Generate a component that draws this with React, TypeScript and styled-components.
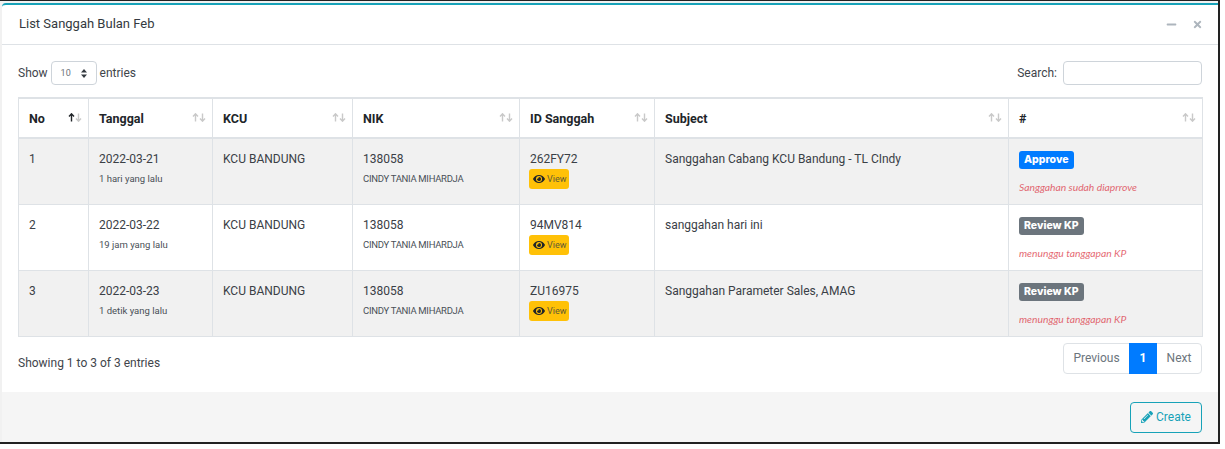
import React from "react";
import styled, { createGlobalStyle } from "styled-components";
import { FaEye, FaMinus, FaPencilAlt, FaTimes } from "react-icons/fa";

const GlobalStyle = createGlobalStyle`
  html, body {
    margin: 0;
    padding: 0;
    background: #fff;
  }
  body {
    font-family: "Roboto", "Noto Sans", sans-serif;
    font-size: 12px;
    color: #212529;
  }
`;

const Frame = styled.div`
  box-sizing: border-box;
  width: 1220px;
  height: 444px;
  padding: 2px 0 0 2px;
  background: #f1f1f1;
  border-top: 1px solid #222;
  border-right: 2px solid #222;
  border-bottom: 2px solid #222;
`;

const Card = styled.section`
  display: flex;
  flex-direction: column;
  height: 100%;
  box-sizing: border-box;
  background: #fff;
  border-top: 2px solid #17a2b8;
  border-top-left-radius: 4px;
`;

const CardHeader = styled.header`
  display: flex;
  align-items: center;
  justify-content: space-between;
  box-sizing: border-box;
  height: 40px;
  padding: 0 15px 2px 17px;
  border-bottom: 1px solid #dee2e6;
`;

const Title = styled.h3`
  margin: 0;
  font-size: 13px;
  font-weight: 400;
  color: #343a40;
`;

const Tools = styled.div`
  display: flex;
  align-items: center;
  gap: 15px;
  padding-top: 1px;
  color: #adb5bd;
  font-size: 11px;
`;

const CardBody = styled.div`
  flex: 1;
  padding: 16px 16px 0 16px;
`;

const TopBar = styled.div`
  display: flex;
  align-items: center;
  justify-content: space-between;
  height: 24px;
  margin-bottom: 12px;
`;

const FieldLabel = styled.label`
  display: flex;
  align-items: center;
  gap: 3px;
  font-size: 12px;
  color: #3f454b;
`;

const LengthBox = styled.span`
  display: inline-flex;
  align-items: center;
  justify-content: space-between;
  box-sizing: border-box;
  width: 46px;
  height: 24px;
  padding: 0 9px;
  border: 1px solid #ced4da;
  border-radius: 4px;
  font-size: 9px;
  color: #6b7278;
`;

const SelectArrows = styled.svg`
  width: 6px;
  height: 9px;
  fill: #343a40;
`;

const SearchInput = styled.input`
  box-sizing: border-box;
  width: 139px;
  height: 24px;
  margin-left: 3px;
  border: 1px solid #ced4da;
  border-radius: 4px;
  background: #fff;
`;

const Table = styled.table`
  width: 1184px;
  table-layout: fixed;
  border-collapse: collapse;
  border: 1px solid #dee2e6;
`;

const HeadCell = styled.th<{ $w: number }>`
  position: relative;
  box-sizing: border-box;
  width: ${(p) => p.$w}px;
  height: 40px;
  padding: 0 10px;
  border: 1px solid #dee2e6;
  border-top-width: 2px;
  border-bottom-width: 2px;
  text-align: left;
  font-size: 12.5px;
  font-weight: 700;
  color: #212529;
`;

const SortIcons = styled.svg`
  position: absolute;
  top: 14px;
  right: 6px;
  width: 14px;
  height: 9px;
  fill: none;
  stroke-width: 1.4;
`;

const Row = styled.tr<{ $odd: boolean }>`
  height: 66px;
  background: ${(p) => (p.$odd ? "#f1f1f1" : "#fff")};
`;

const Cell = styled.td`
  box-sizing: border-box;
  padding: 12px 10px 0;
  border: 1px solid #dee2e6;
  vertical-align: top;
  font-size: 12px;
  line-height: 16px;
  color: #3a4046;
`;

const SubText = styled.div`
  margin-top: 5px;
  font-size: 9.5px;
  line-height: 14px;
  color: #495057;
`;

const NameText = styled(SubText)`
  letter-spacing: -0.3px;
`;

const ViewButton = styled.span`
  display: flex;
  align-items: center;
  gap: 2px;
  box-sizing: border-box;
  width: 40px;
  height: 20px;
  margin: 2px 0 0 -1px;
  padding-left: 4px;
  border-radius: 3px;
  background: #ffc107;
  font-size: 9px;
  color: #5f5a35;

  svg {
    font-size: 12px;
    color: #212529;
  }
`;

const Badge = styled.span<{ $tone: "primary" | "secondary" }>`
  display: inline-block;
  padding: 0 5px;
  height: 18px;
  border-radius: 3px;
  background: ${(p) => (p.$tone === "primary" ? "#007bff" : "#6c757d")};
  font-family: "Inter", "Lato", sans-serif;
  font-size: 10.5px;
  font-weight: 800;
  line-height: 18px;
  color: #fff;
`;

const Note = styled.div`
  margin-top: 11px;
  font-family: "Lato", sans-serif;
  font-size: 10.3px;
  font-style: italic;
  line-height: 14px;
  color: #dc3545;
  opacity: 0.75;
`;

const BottomBar = styled.div`
  display: flex;
  align-items: flex-start;
  justify-content: space-between;
  margin-top: 6px;
`;

const Info = styled.div`
  padding-top: 13px;
  font-size: 12px;
  color: #3f454b;
`;

const Pager = styled.nav`
  display: flex;
  box-sizing: border-box;
  height: 31px;
  border: 1px solid #dee2e6;
  border-radius: 4px;
`;

const PageItem = styled.span<{ $active?: boolean; $w: number }>`
  display: flex;
  align-items: center;
  justify-content: center;
  width: ${(p) => p.$w}px;
  margin: -1px 0;
  font-size: 12px;
  font-weight: ${(p) => (p.$active ? 700 : 400)};
  background: ${(p) => (p.$active ? "#007bff" : "transparent")};
  color: ${(p) => (p.$active ? "#fff" : "#6c757d")};
`;

const CardFooter = styled.footer`
  display: flex;
  align-items: center;
  justify-content: flex-end;
  box-sizing: border-box;
  height: 50px;
  padding: 0 16px 0 0;
  background: #f5f5f5;
`;

const CreateButton = styled.button`
  display: flex;
  align-items: center;
  justify-content: center;
  gap: 3px;
  box-sizing: border-box;
  width: 72px;
  height: 31px;
  border: 1px solid #17a2b8;
  border-radius: 4px;
  background: transparent;
  font-family: inherit;
  font-size: 12px;
  color: #17a2b8;
`;

const columns = [
  { label: "No", width: 70 },
  { label: "Tanggal", width: 124 },
  { label: "KCU", width: 140 },
  { label: "NIK", width: 167 },
  { label: "ID Sanggah", width: 135 },
  { label: "Subject", width: 354 },
  { label: "#", width: 194 },
];

const rows = [
  {
    no: 1,
    date: "2022-03-21",
    ago: "1 hari yang lalu",
    id: "262FY72",
    subject: "Sanggahan Cabang KCU Bandung - TL CIndy",
    status: "Approve",
    tone: "primary" as const,
    note: "Sanggahan sudah diaprrove",
  },
  {
    no: 2,
    date: "2022-03-22",
    ago: "19 jam yang lalu",
    id: "94MV814",
    subject: "sanggahan hari ini",
    status: "Review KP",
    tone: "secondary" as const,
    note: "menunggu tanggapan KP",
  },
  {
    no: 3,
    date: "2022-03-23",
    ago: "1 detik yang lalu",
    id: "ZU16975",
    subject: "Sanggahan Parameter Sales, AMAG",
    status: "Review KP",
    tone: "secondary" as const,
    note: "menunggu tanggapan KP",
  },
];

const SortArrows = ({ active }: { active: boolean }) => (
  <SortIcons viewBox="0 0 14 9">
    <path
      d="M3.5 8.5V1M1 3.4l2.5-2.6L6 3.4"
      stroke={active ? "#212529" : "#c9c9c9"}
    />
    <path d="M10.5 .5V8M8 5.6l2.5 2.6L13 5.6" stroke="#c9c9c9" />
  </SortIcons>
);

export default function App() {
  return (
    <>
      <GlobalStyle />
      <Frame>
        <Card>
          <CardHeader>
            <Title>List Sanggah Bulan Feb</Title>
            <Tools>
              <FaMinus />
              <FaTimes />
            </Tools>
          </CardHeader>
          <CardBody>
            <TopBar>
              <FieldLabel>
                Show
                <LengthBox>
                  10
                  <SelectArrows viewBox="0 0 6 9">
                    <path d="M3 0l3 3.4H0zM3 9L0 5.6h6z" />
                  </SelectArrows>
                </LengthBox>
                entries
              </FieldLabel>
              <FieldLabel>
                Search:
                <SearchInput type="text" />
              </FieldLabel>
            </TopBar>
            <Table>
              <thead>
                <tr>
                  {columns.map((col, i) => (
                    <HeadCell key={col.label} $w={col.width}>
                      {col.label}
                      <SortArrows active={i === 0} />
                    </HeadCell>
                  ))}
                </tr>
              </thead>
              <tbody>
                {rows.map((row) => (
                  <Row key={row.no} $odd={row.no % 2 === 1}>
                    <Cell>{row.no}</Cell>
                    <Cell>
                      {row.date}
                      <SubText>{row.ago}</SubText>
                    </Cell>
                    <Cell>KCU BANDUNG</Cell>
                    <Cell>
                      138058
                      <NameText>CINDY TANIA MIHARDJA</NameText>
                    </Cell>
                    <Cell>
                      {row.id}
                      <ViewButton>
                        <FaEye />
                        View
                      </ViewButton>
                    </Cell>
                    <Cell>{row.subject}</Cell>
                    <Cell>
                      <Badge $tone={row.tone}>{row.status}</Badge>
                      <Note>{row.note}</Note>
                    </Cell>
                  </Row>
                ))}
              </tbody>
            </Table>
            <BottomBar>
              <Info>Showing 1 to 3 of 3 entries</Info>
              <Pager>
                <PageItem $w={65}>Previous</PageItem>
                <PageItem $w={28} $active>
                  1
                </PageItem>
                <PageItem $w={44}>Next</PageItem>
              </Pager>
            </BottomBar>
          </CardBody>
          <CardFooter>
            <CreateButton>
              <FaPencilAlt />
              Create
            </CreateButton>
          </CardFooter>
        </Card>
      </Frame>
    </>
  );
}
